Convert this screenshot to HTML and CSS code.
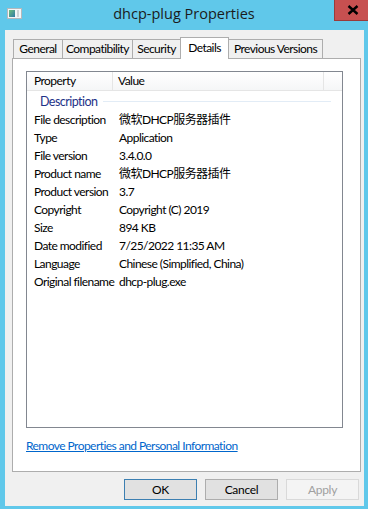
FILE: index.html
```html
<!DOCTYPE html>
<html lang="en">
<head>
  <meta charset="UTF-8">
  <title>dhcp-plug Properties</title>
  <link rel="stylesheet" href="styles.css">
</head>
<body>
  <div class="window">
    <div class="titlebar">
      <svg class="app-icon" width="15" height="11" viewBox="0 0 15 11">
        <defs>
          <linearGradient id="ig" x1="0" y1="0" x2="1" y2="1">
            <stop offset="0" stop-color="#6fbf7a"/>
            <stop offset="1" stop-color="#2f78a8"/>
          </linearGradient>
        </defs>
        <rect x="0.5" y="0.5" width="14" height="10" fill="#f4f6f8" stroke="#b4b8bc"/>
        <rect x="2" y="2" width="6" height="7" fill="url(#ig)"/>
        <rect x="10" y="2" width="2" height="7" fill="#cfd3d6"/>
      </svg>
      <div class="title">dhcp-plug Properties</div>
      <div class="close">
        <svg width="12" height="10" viewBox="0 0 12 10">
          <path d="M1.5 1 L10.5 9 M10.5 1 L1.5 9" stroke="#000" stroke-width="2.4"/>
        </svg>
      </div>
    </div>

    <div class="client">
      <div class="tabs">
        <div class="tab tab-general">General</div>
        <div class="tab tab-compat">Compatibility</div>
        <div class="tab tab-security">Security</div>
        <div class="tab tab-details tab-active">Details</div>
        <div class="tab tab-versions">Previous Versions</div>
      </div>

      <div class="panel">
        <div class="listview">
          <div class="lv-header">
            <div class="col-prop">Property</div>
            <div class="col-val">Value</div>
            <div class="col-fill"></div>
          </div>
          <div class="group">
            <span class="group-name">Description</span>
            <span class="group-line"></span>
          </div>
          <div class="row"><span class="prop">File description</span><span class="val cjk">微软DHCP服务器插件</span></div>
          <div class="row"><span class="prop">Type</span><span class="val">Application</span></div>
          <div class="row"><span class="prop">File version</span><span class="val">3.4.0.0</span></div>
          <div class="row"><span class="prop">Product name</span><span class="val cjk">微软DHCP服务器插件</span></div>
          <div class="row"><span class="prop">Product version</span><span class="val">3.7</span></div>
          <div class="row"><span class="prop">Copyright</span><span class="val">Copyright (C) 2019</span></div>
          <div class="row"><span class="prop">Size</span><span class="val">894 KB</span></div>
          <div class="row"><span class="prop">Date modified</span><span class="val">7/25/2022 11:35 AM</span></div>
          <div class="row"><span class="prop">Language</span><span class="val">Chinese (Simplified, China)</span></div>
          <div class="row"><span class="prop">Original filename</span><span class="val">dhcp-plug.exe</span></div>
        </div>
        <a class="link" href="#">Remove Properties and Personal Information</a>
      </div>

      <div class="buttons">
        <button class="btn btn-default">OK</button>
        <button class="btn">Cancel</button>
        <button class="btn" disabled>Apply</button>
      </div>
    </div>
  </div>
</body>
</html>
```

FILE: styles.css
```css
html, body {
  margin: 0;
  padding: 0;
}
body {
  font-family: Lato, 'Liberation Sans', sans-serif;
  font-size: 12px;
  letter-spacing: -0.55px;
  color: #000;
}
.window {
  width: 368px;
  height: 509px;
  background: #60c8ea;
  box-sizing: border-box;
  padding: 0 4px 3px 5px;
  display: flex;
  flex-direction: column;
}
.titlebar {
  height: 30px;
  margin: 0 -4px 0 -5px;
  display: grid;
  grid-template-columns: 1fr auto 1fr;
  align-items: start;
}
.app-icon { margin: 8px 0 0 7px; }
.title {
  font-family: 'Open Sans', sans-serif;
  font-size: 14.5px;
  letter-spacing: 0;
  line-height: 30px;
  color: #1b1b1b;
  margin-top: -1px;
}
.close {
  justify-self: end;
  width: 34px;
  height: 21px;
  background: #c75050;
  border-left: 1px solid #9a3a3a;
  border-bottom: 1px solid #9a3a3a;
  box-sizing: border-box;
  display: flex;
  align-items: center;
  justify-content: center;
  padding-left: 2px;
}
.client {
  flex: 1;
  background: #f0f0f0;
  display: flex;
  flex-direction: column;
}
.tabs {
  display: flex;
  align-items: flex-end;
  padding: 7px 0 0 8px;
  height: 21px;
  position: relative;
  z-index: 1;
}
.tab {
  height: 19px;
  line-height: 18px;
  text-align: center;
  border: 1px solid #adadad;
  border-bottom: none;
  margin-right: -1px;
  background: #f0f0f0;
  box-sizing: border-box;
  white-space: nowrap;
}
.tab-general { width: 50px; }
.tab-compat { width: 71px; }
.tab-security { width: 49px; }
.tab-details { width: 49px; }
.tab-versions { width: 95px; }
.tab-active {
  height: 22px;
  background: #fff;
  margin-bottom: -1px;
  line-height: 19px;
  position: relative;
}
.panel {
  margin-left: 7px;
  width: 349px;
  height: 414px;
  box-sizing: border-box;
  border: 1px solid #adadad;
  background: #fff;
  padding: 12px 0 0 13px;
}
.listview {
  width: 317px;
  height: 357px;
  box-sizing: border-box;
  border: 1px solid #828790;
}
.lv-header {
  display: flex;
  height: 19px;
  line-height: 18px;
  background: linear-gradient(#fff, #f5f6f7);
  border-bottom: 1px solid #e5e5e5;
  box-sizing: border-box;
}
.col-prop {
  width: 86px;
  padding-left: 7px;
  box-sizing: border-box;
  border-right: 1px solid #e5e5e5;
}
.col-val {
  width: 211px;
  padding-left: 5px;
  box-sizing: border-box;
  border-right: 1px solid #e5e5e5;
}
.col-fill { flex: 1; }
.group {
  display: flex;
  align-items: center;
  height: 20px;
  padding-left: 13px;
}
.group-name {
  color: #1e3287;
  font-size: 12.5px;
  margin-right: 6px;
}
.group-line {
  flex: 1;
  height: 1px;
  background: #e2ecf6;
  margin-right: 11px;
}
.row {
  display: flex;
  height: 18px;
  line-height: 18px;
}
.prop {
  width: 92px;
  padding-left: 7px;
  box-sizing: border-box;
  white-space: nowrap;
}
.val { white-space: nowrap; }
.cjk { font-family: Lato, 'Noto Sans CJK SC', sans-serif; }
.link {
  display: block;
  margin-top: 10px;
  color: #0066cc;
  text-decoration: underline;
  width: max-content;
}
.buttons {
  display: flex;
  justify-content: flex-end;
  gap: 8px;
  padding: 7px 5px 0 0;
}
.btn {
  width: 73px;
  height: 21px;
  font-family: Lato, 'Liberation Sans', sans-serif;
  font-size: 12px;
  letter-spacing: -0.3px;
  background: #e1e1e1;
  border: 1px solid #adadad;
  color: #000;
  padding: 0;
}
.btn-default { border-color: #3c7fb1; }
.btn:disabled {
  background: #f4f4f4;
  border-color: #d9d9d9;
  color: #a0a0a0;
}
```
